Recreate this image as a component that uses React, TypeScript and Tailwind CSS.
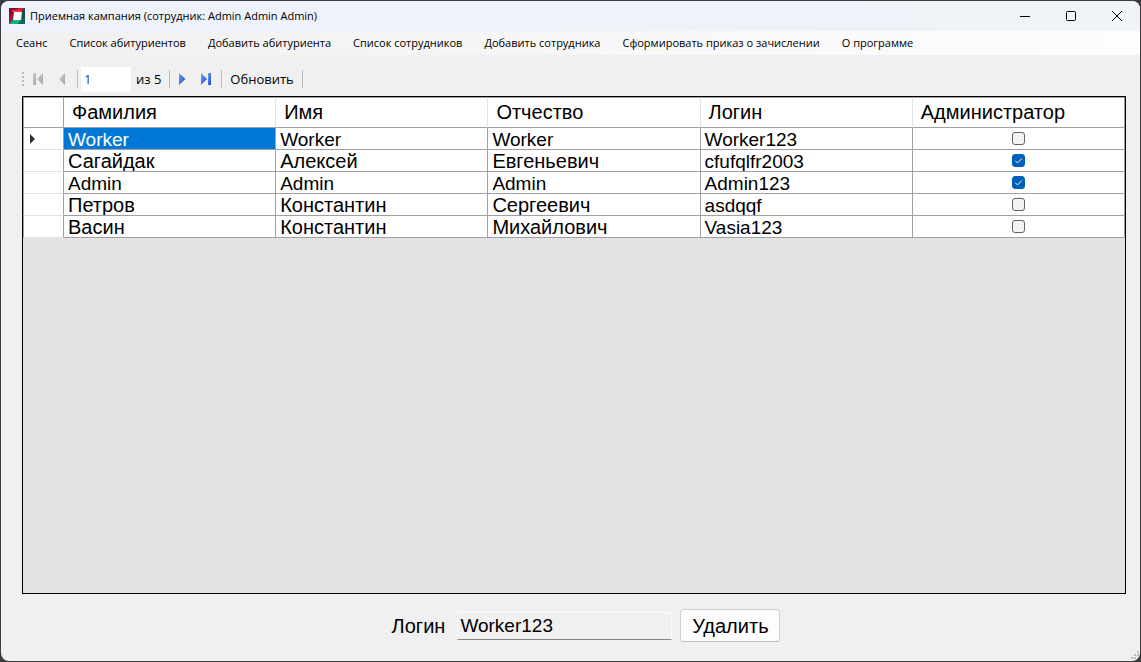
import { useState } from "react";

const menu = [
  "Сеанс",
  "Список абитуриентов",
  "Добавить абитуриента",
  "Список сотрудников",
  "Добавить сотрудника",
  "Сформировать приказ о зачислении",
  "О программе",
];

const columns = ["Фамилия", "Имя", "Отчество", "Логин", "Администратор"];

const rows = [
  { cells: ["Worker", "Worker", "Worker", "Worker123"], admin: false },
  { cells: ["Сагайдак", "Алексей", "Евгеньевич", "cfufqlfr2003"], admin: true },
  { cells: ["Admin", "Admin", "Admin", "Admin123"], admin: true },
  { cells: ["Петров", "Константин", "Сергеевич", "asdqqf"], admin: false },
  { cells: ["Васин", "Константин", "Михайлович", "Vasia123"], admin: false },
];

const isLatin = (text: string) => /^[\x20-\x7e]+$/.test(text);

function AppLogo() {
  return (
    <svg width="16" height="16" viewBox="0 0 16 16" aria-hidden="true">
      <rect width="16" height="16" fill="#1c4040" />
      <path d="M0 0H16L12 3H4L3 12L0 16Z" fill="#e0123f" />
      <path d="M0 0H6L4 4L3 12L0 16Z" fill="#c00d38" />
      <path d="M0 0H9L0 9Z" fill="#7d1030" />
      <path d="M3 2H15L12 4H3Z" fill="#f0324a" />
      <path d="M16 0V16H12V4Z" fill="#164f47" />
      <path d="M0 16L4 12H12L16 16Z" fill="#12b579" />
      <path d="M9 16L12 11L16 9V16Z" fill="#0d6a50" />
      <path d="M5 4H13L12 12H4Z" fill="#fff" />
    </svg>
  );
}

function Separator() {
  return <span className="h-[18px] w-px shrink-0 bg-[#bdbdbd]" />;
}

function NavIcon({ kind }: { kind: "first" | "prev" | "next" | "last" }) {
  const active = kind === "next" || kind === "last";
  const dark = active ? "#1746b8" : "#a3a3a3";
  const light = active ? "#6fa5fb" : "#cfcfcf";
  const id = "nav-" + kind;
  return (
    <svg width="12" height="14" viewBox="0 0 12 14" aria-hidden="true">
      <defs>
        <linearGradient id={id} x1="0" y1="0" x2="1" y2="1">
          <stop offset="0" stopColor={light} />
          <stop offset="1" stopColor={dark} />
        </linearGradient>
      </defs>
      {kind === "first" && (
        <>
          <rect x="1" y="1" width="3" height="12" fill={"url(#" + id + ")"} />
          <path d="M11 1V13L5 7Z" fill={"url(#" + id + ")"} />
        </>
      )}
      {kind === "prev" && <path d="M9 1V13L3 7Z" fill={"url(#" + id + ")"} />}
      {kind === "next" && <path d="M3 1V13L9.500 7Z" fill={"url(#" + id + ")"} />}
      {kind === "last" && (
        <>
          <path d="M1 1V13L7 7Z" fill={"url(#" + id + ")"} />
          <rect x="8" y="1" width="3" height="12" fill={"url(#" + id + ")"} />
        </>
      )}
    </svg>
  );
}

function TitleBar() {
  return (
    <header className="flex h-[30px] shrink-0 items-center bg-linear-to-r from-[#eef2fc] to-[#eef4f8] pl-2">
      <AppLogo />
      <h1 className="ml-[5px] flex-1 font-['Open_Sans',sans-serif] text-[11px] text-black">
        Приемная кампания (сотрудник: Admin Admin Admin)
      </h1>
      <button aria-label="Свернуть" className="flex h-full w-[46px] items-center justify-center">
        <svg width="10" height="10" viewBox="0 0 10 10">
          <path d="M0 5.500H10" stroke="#000" />
        </svg>
      </button>
      <button aria-label="Развернуть" className="flex h-full w-[46px] items-center justify-center">
        <svg width="10" height="10" viewBox="0 0 10 10">
          <rect x="0.500" y="0.500" width="9" height="9" rx="1" fill="none" stroke="#000" />
        </svg>
      </button>
      <button aria-label="Закрыть" className="flex h-full w-[46px] items-center justify-center">
        <svg width="10" height="10" viewBox="0 0 10 10">
          <path d="M0 0L10 10M10 0L0 10" stroke="#000" />
        </svg>
      </button>
    </header>
  );
}

function Toolbar({ position, onMove }: { position: number; onMove: (n: number) => void }) {
  return (
    <div className="flex h-[26px] items-center font-['Open_Sans',sans-serif] text-[13px]">
      <svg width="2" height="14" viewBox="0 0 2 14" aria-hidden="true">
        {[0, 4, 8, 12].map((y) => (
          <rect key={y} y={y} width="2" height="2" fill="#bcbcbc" />
        ))}
      </svg>
      <button aria-label="В начало" disabled className="ml-2">
        <NavIcon kind="first" />
      </button>
      <button aria-label="Назад" disabled className="mr-[9px] ml-3">
        <NavIcon kind="prev" />
      </button>
      <Separator />
      <input
        aria-label="Текущая запись"
        value={position}
        onChange={(e) => onMove(Number(e.target.value) || 1)}
        className="ml-[3px] h-[25px] w-[50px] bg-white pl-[3px] text-[#1a4a7a] outline-none"
      />
      <span className="mr-2 ml-[5px] pt-px whitespace-nowrap">из 5</span>
      <Separator />
      <button aria-label="Вперед" className="ml-[6px]">
        <NavIcon kind="next" />
      </button>
      <button aria-label="В конец" className="mr-[9px] ml-3">
        <NavIcon kind="last" />
      </button>
      <Separator />
      <button className="mr-2 ml-2 pt-px">Обновить</button>
      <Separator />
    </div>
  );
}

function StaffTable({ selected, onSelect }: { selected: number; onSelect: (n: number) => void }) {
  return (
    <table className="w-full table-fixed border-separate border-spacing-0 bg-white">
      <colgroup>
        <col className="w-[41px]" />
        {columns.map((c) => (
          <col key={c} />
        ))}
      </colgroup>
      <thead>
        <tr className="h-[31px]">
          <th className="border-t border-r border-b border-l border-[#a0a0a0] p-0" />
          {columns.map((c) => (
            <th
              key={c}
              scope="col"
              className="border-t border-r border-b border-t-[#a0a0a0] border-r-[#e2e2e2] border-b-[#a0a0a0] px-2 pt-0 pb-[2px] text-left text-[20px] leading-6 font-normal last:border-r-[#a0a0a0]"
            >
              {c}
            </th>
          ))}
        </tr>
      </thead>
      <tbody>
        {rows.map((row, i) => (
          <tr key={i} className="h-[22px]" onClick={() => onSelect(i)}>
            <th className="border-r border-b border-l border-r-[#a0a0a0] border-b-[#e2e2e2] border-l-[#a0a0a0] p-0">
              {i === selected && (
                <svg width="5" height="10" viewBox="0 0 5 10" className="ml-[6px]" aria-hidden="true">
                  <path d="M0 0L5 5L0 10Z" fill="#303030" />
                </svg>
              )}
            </th>
            {row.cells.map((cell, j) => (
              <td
                key={j}
                className={
                  "overflow-hidden border-r border-b border-[#a0a0a0] px-1 pt-[2px] pb-0 leading-[19px] whitespace-nowrap " +
                  (isLatin(cell) ? "text-[19px] " : "text-[20px] ") +
                  (i === selected && j === 0 ? "bg-[#0078d7] text-white" : "")
                }
              >
                {cell}
              </td>
            ))}
            <td className="border-r border-b border-[#a0a0a0] p-0">
              <label className="flex h-[21px] items-center justify-center">
                <input
                  type="checkbox"
                  aria-label={"Администратор " + row.cells[3]}
                  checked={row.admin}
                  readOnly
                  className="peer size-[13px] appearance-none rounded-[3px] border border-[#626262] bg-[#f3f3f3] checked:border-[#005fb8] checked:bg-[#005fb8]"
                />
                <svg
                  width="13"
                  height="13"
                  viewBox="0 0 13 13"
                  aria-hidden="true"
                  className="pointer-events-none invisible absolute peer-checked:visible"
                >
                  <path d="M3.300 6.700L5.500 8.900L9.900 4.500" fill="none" stroke="#fff" />
                </svg>
              </label>
            </td>
          </tr>
        ))}
      </tbody>
    </table>
  );
}

function SizeGrip() {
  return (
    <svg width="8" height="8" viewBox="0 0 8 8" aria-hidden="true" className="absolute right-[1px] bottom-[2px]">
      <path d="M6 0h2v2h-2zM3 3h2v2h-2zM6 3h2v2h-2zM0 6h2v2h-2zM3 6h2v2h-2zM6 6h2v2h-2z" fill="#bcbcbc" />
    </svg>
  );
}

export default function App() {
  const [selected, setSelected] = useState(0);
  return (
    <div className="h-screen bg-[#3c3c3e] p-px font-['Liberation_Sans',sans-serif] text-black">
      <div className="relative flex h-full flex-col overflow-hidden rounded-lg bg-[#f0f0f0]">
        <TitleBar />
        <nav className="flex h-6 shrink-0 items-center gap-[22px] bg-linear-to-r from-[#f0f0f0] to-[#fdfdfd] pl-[15px] font-['Open_Sans',sans-serif] text-[11px]">
          {menu.map((item) => (
            <button key={item} className="whitespace-nowrap">
              {item}
            </button>
          ))}
        </nav>
        <main className="flex min-h-0 flex-1 flex-col pt-[11px] pr-[14px] pl-[21px]">
          <Toolbar
            position={selected + 1}
            onMove={(n) => setSelected(Math.min(Math.max(n, 1), rows.length) - 1)}
          />
          <section className="mt-1 min-h-0 flex-1 overflow-hidden border border-black bg-[#e3e3e3]">
            <StaffTable selected={selected} onSelect={setSelected} />
          </section>
          <form
            className="flex h-[67px] shrink-0 items-center justify-center pb-1 pl-6 text-[20px]"
            onSubmit={(e) => e.preventDefault()}
          >
            <label htmlFor="login">Логин</label>
            <input
              id="login"
              readOnly
              value={rows[selected].cells[3]}
              className="ml-3 h-[28px] w-[215px] border border-[#fafafa] border-b-[#868686] bg-[#f0f0f0] px-[2px] pt-[2px] text-[19px] outline-none"
            />
            <button className="ml-2 h-[33px] w-[100px] rounded-sm border border-[#d0d0d0] border-b-[#bababa] bg-[#fdfdfd]">
              Удалить
            </button>
          </form>
        </main>
        <SizeGrip />
      </div>
    </div>
  );
}
